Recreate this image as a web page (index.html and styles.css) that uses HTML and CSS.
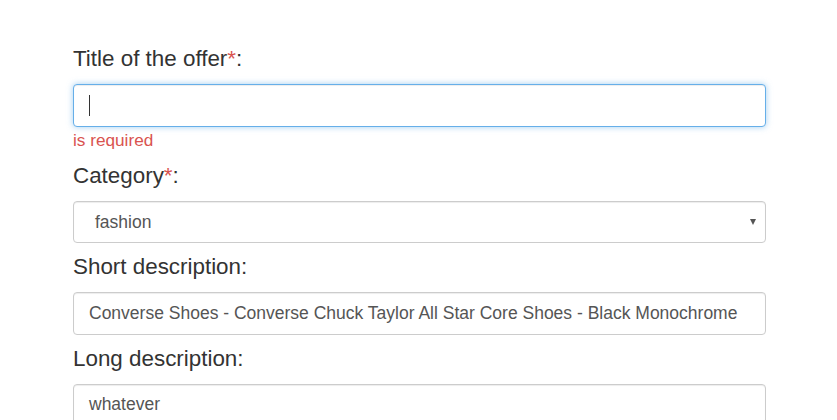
FILE: index.html
```html
<!DOCTYPE html>
<html>
<head>
<meta charset="utf-8">
<link rel="stylesheet" href="styles.css">
</head>
<body>
<div class="form">
  <div class="group group-error">
    <div class="label">Title of the offer<span class="req">*</span>:</div>
    <div class="control focus"><span class="caret"></span></div>
    <div class="error">is required</div>
  </div>
  <div class="group group-tight">
    <div class="label">Category<span class="req">*</span>:</div>
    <div class="control select"><span class="value">fashion</span><span class="arrow"></span></div>
  </div>
  <div class="group group-tight">
    <div class="label">Short description:</div>
    <div class="control"><span class="value">Converse Shoes - Converse Chuck Taylor All Star Core Shoes - Black Monochrome</span></div>
  </div>
  <div class="group">
    <div class="label">Long description:</div>
    <div class="control textarea"><span class="value">whatever</span></div>
  </div>
</div>
</body>
</html>
```

FILE: styles.css
```css
html, body {
  margin: 0;
  padding: 0;
  background: #fff;
  overflow: hidden;
}
.form {
  padding: 43px 0 0 73px;
  width: 693px;
  font-family: "Liberation Sans", Arial, sans-serif;
}
.group {
  margin-bottom: 9px;
}
.group-error {
  margin-bottom: 10px;
}
.group-tight {
  margin-bottom: 8px;
}
.label {
  font-size: 22.4px;
  line-height: 31px;
  color: #333;
  margin-bottom: 10px;
}
.req {
  color: #d9534f;
}
.control {
  box-sizing: border-box;
  height: 43px;
  border: 1px solid #ccc;
  border-radius: 4px;
  box-shadow: inset 0 1px 1px rgba(0,0,0,.075);
  display: flex;
  align-items: center;
  padding: 0 15px;
  font-size: 17.5px;
  color: #555;
  background: #fff;
}
.control.focus {
  border-color: #66afe9;
  box-shadow: inset 0 1px 1px rgba(0,0,0,.075), 0 0 6px rgba(102,175,233,.6);
}
.caret {
  width: 1px;
  height: 21px;
  background: #333;
}
.error {
  margin-top: 3px;
  font-size: 17.2px;
  line-height: 20px;
  color: #d9534f;
}
.select {
  height: 42px;
  margin-top: 2px;
  padding: 0 9px 0 21px;
  justify-content: space-between;
}
.arrow {
  width: 0;
  height: 0;
  border-left: 3.5px solid transparent;
  border-right: 3.5px solid transparent;
  border-top: 6px solid #555;
}
.textarea {
  height: 60px;
  align-items: flex-start;
  padding-top: 9px;
}
.value {
  white-space: nowrap;
}
```
